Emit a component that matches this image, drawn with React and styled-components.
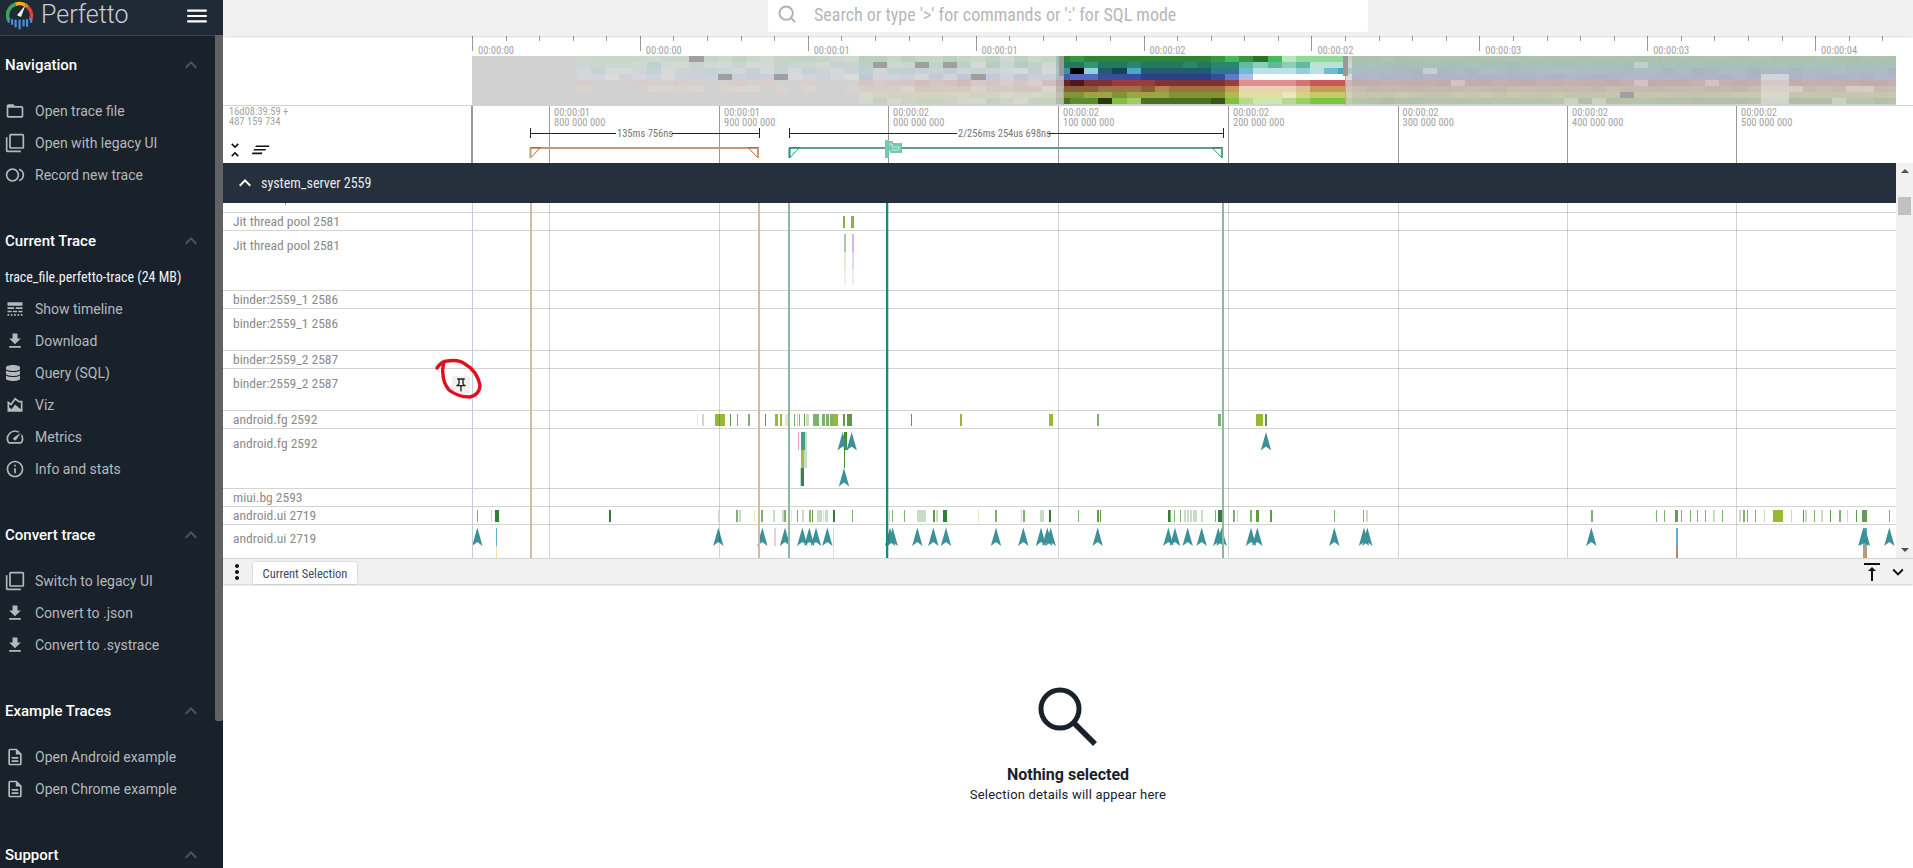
import React from "react";
import styled, { createGlobalStyle } from "styled-components";
import {
  MdFolderOpen, MdFilterNone, MdOutlineFiberSmartRecord, MdLineStyle, MdFileDownload,
  MdOutlineAreaChart, MdSpeed, MdInfoOutline, MdOutlineDescription, MdExpandLess,
  MdMenu, MdUnfoldLess, MdOutlinePushPin, MdVerticalAlignTop, MdKeyboardArrowDown, MdMoreVert,
} from "react-icons/md";
import { FaDatabase } from "react-icons/fa";
import { FiSearch } from "react-icons/fi";

const narrow = `"Roboto Condensed", Roboto, "Liberation Sans", sans-serif`;

const Global = createGlobalStyle`
  html, body { margin: 0; padding: 0; height: 100%; overflow: hidden; background: #fff; }
  body { font-family: Roboto, "Liberation Sans", sans-serif; }
  * { box-sizing: border-box; }
`;

const Page = styled.div`
  display: grid;
  grid-template-columns: 223px 1fr;
  height: 868px;
  width: 1913px;
  overflow: hidden;
`;

/* ---------- sidebar ---------- */
const Sidebar = styled.aside`
  position: relative;
  background: #19212b;
  height: 868px;
  overflow: hidden;
`;
const SideHeader = styled.header`
  height: 36px;
  background: #202a36;
  border-bottom: 1px solid #3a444f;
  display: flex;
  align-items: center;
  padding-left: 6px;
  margin-bottom: 13px;
`;
const LogoMark = styled.svg`
  flex: none;
  margin-top: -5px;
`;
const BrandName = styled.span`
  font-size: 25px;
  font-weight: 300;
  color: #c9ced3;
  margin-left: 7px;
  margin-top: -6px;
  width: 143px;
`;
const MenuIcon = styled.span`
  display: flex;
  color: #fff;
  margin-top: -3px;
`;
const Section = styled.section`
  margin-bottom: 34px;
`;
const SectionHead = styled.div`
  height: 32px;
  display: flex;
  align-items: center;
  justify-content: space-between;
  padding: 0 20px 0 5px;
  margin-bottom: ${(p) => p.$gap}px;
  color: #fff;
  font-size: 15px;
  font-weight: 500;
  svg { color: #4a5560; }
`;
const TraceName = styled.div`
  height: 32px;
  line-height: 32px;
  padding-left: 5px;
  font-family: ${narrow};
  font-stretch: 75%;
  font-size: 14px;
  color: #f2f3f4;
  white-space: nowrap;
`;
const NavItem = styled.div`
  height: 32px;
  display: flex;
  align-items: center;
  padding-left: 5px;
  color: #b5b8bb;
  font-size: 14px;
  svg { flex: none; }
`;
const NavIcon = styled.span`
  width: 30px;
  display: flex;
  align-items: center;
  color: #b5b8bb;
`;
const SideThumb = styled.div`
  position: absolute;
  right: 0;
  top: 35px;
  width: 8px;
  height: 686px;
  background: #5f6368;
  border-radius: 0 0 2px 2px;
`;

/* ---------- main ---------- */
const Main = styled.main`
  display: flex;
  flex-direction: column;
  height: 868px;
  min-width: 0;
`;
const TopBar = styled.div`
  flex: 0 0 36px;
  background: #f1f1f1;
  box-shadow: 0 1px 2px rgba(0, 0, 0, 0.15);
  position: relative;
  display: flex;
  justify-content: center;
`;
const SearchBox = styled.div`
  width: 600px;
  height: 32px;
  background: #fff;
  display: flex;
  align-items: center;
  padding: 0 0 4px 9px;
  border-radius: 0 0 2px 2px;
`;
const SearchText = styled.span`
  margin-left: 17px;
  font-family: ${narrow};
  font-stretch: 75%;
  font-size: 18px;
  color: #b7b7b7;
  white-space: nowrap;
`;
const Overview = styled.div`
  flex: 0 0 70px;
  border-bottom: 1px solid #d2d2d2;
  svg { display: block; }
`;
const TickText = styled.text`
  font-family: ${narrow};
  font-stretch: 75%;
  font-size: 10.5px;
  fill: #a3a3a3;
`;
const ScaleRow = styled.div`
  flex: 0 0 57px;
  display: flex;
  svg { display: block; }
`;
const ScaleLabel = styled.div`
  flex: 0 0 250px;
  border-right: 2px solid #999;
  padding: 1px 0 0 6px;
  font-family: ${narrow};
  font-stretch: 75%;
  font-size: 10.5px;
  line-height: 10px;
  color: #a3a3a3;
  display: flex;
  flex-direction: column;
`;
const ScaleTools = styled.div`
  margin-top: 13px;
  display: flex;
  align-items: center;
  color: #111;
  margin-left: -4px;
  gap: 6px;
`;
const TrackArea = styled.div`
  flex: 0 0 395px;
  min-height: 0;
  display: flex;
`;
const TrackColumn = styled.div`
  flex: 0 0 1673px;
  display: flex;
  flex-direction: column;
`;
const GroupHeader = styled.div`
  flex: 0 0 40px;
  background: #262f3c;
  display: flex;
  align-items: center;
  padding-left: 10px;
  color: #e8eaec;
  font-family: ${narrow};
  font-stretch: 75%;
  font-size: 14px;
  gap: 4px;
  svg { color: #fff; }
`;
const Rows = styled.div`
  position: relative;
  flex: 1 1 auto;
  overflow: hidden;
`;
const Overlay = styled.svg`
  position: absolute;
  inset: 0;
  pointer-events: none;
`;
const TrackRow = styled.div`
  height: ${(p) => p.$h}px;
  display: flex;
  overflow: hidden;
  border-bottom: ${(p) => (p.$last ? "none" : "1px solid #d4d4d4")};
`;
const TrackLabel = styled.div`
  flex: 0 0 249px;
  display: flex;
  justify-content: space-between;
  align-items: flex-start;
  padding: ${(p) => p.$top}px 2px 0 10px;
  font-family: ${narrow};
  font-stretch: 75%;
  font-size: 13.5px;
  line-height: 16px;
  color: #8b8b8b;
  white-space: nowrap;
`;
const PinButton = styled.span`
  width: 18px;
  height: 18px;
  margin-top: 1px;
  background: #f0f0f0;
  border-radius: 2px;
  display: flex;
  align-items: center;
  justify-content: center;
  color: #222;
`;
const TrackCanvas = styled.svg`
  flex: 0 0 1424px;
  display: block;
`;
const ScrollTrack = styled.div`
  flex: 0 0 17px;
  background: #f1f1f1;
  position: relative;
  display: flex;
  flex-direction: column;
  align-items: center;
  justify-content: space-between;
  padding: 6px 0;
`;
const ScrollArrow = styled.span`
  width: 0;
  height: 0;
  border-left: 4px solid transparent;
  border-right: 4px solid transparent;
  ${(p) => (p.$up ? "border-bottom: 4px solid #505050;" : "border-top: 4px solid #505050;")}
`;
const ScrollThumb = styled.div`
  position: absolute;
  top: 34px;
  left: 2px;
  width: 13px;
  height: 18px;
  background: #c1c1c1;
`;
const TabBar = styled.div`
  flex: 0 0 26px;
  background: #f1f1f1;
  border-top: 1px solid #d4d4d4;
  box-shadow: 0 1px 2px rgba(0, 0, 0, 0.2);
  display: flex;
  align-items: flex-end;
  position: relative;
  padding-left: 2px;
`;
const MoreIcon = styled.span`
  display: flex;
  align-self: flex-start;
  margin-top: 1px;
  color: #111;
  width: 28px;
`;
const Tab = styled.div`
  width: 104px;
  height: 22px;
  background: #fff;
  border-radius: 2px 2px 0 0;
  box-shadow: 0 0 2px rgba(0, 0, 0, 0.25);
  font-family: ${narrow};
  font-stretch: 75%;
  font-size: 12.5px;
  line-height: 23px;
  text-align: center;
  color: #3c4b5d;
`;
const TabActions = styled.div`
  margin-left: auto;
  align-self: center;
  display: flex;
  align-items: center;
  color: #111;
  padding-right: 4px;
  gap: 3px;
`;
const Details = styled.div`
  flex: 1 1 auto;
  display: flex;
  flex-direction: column;
  align-items: center;
  padding-top: 103px;
  color: #19212b;
`;
const EmptyTitle = styled.div`
  margin-top: 19px;
  font-size: 16px;
  font-weight: 700;
  line-height: 18px;
`;
const EmptyText = styled.div`
  margin-top: 2px;
  font-size: 13px;
  line-height: 18px;
  letter-spacing: 0.2px;
`;

/* ---------- data ---------- */
const Logo = () => (
  <LogoMark width="28" height="30" viewBox="0 0 28 30">
    <path d="M2.6 20 A11.5 11.5 0 0 1 9.5 4.3" fill="none" stroke="#37a853" strokeWidth="3.6" />
    <path d="M9.5 4.3 A11.5 11.5 0 0 1 19 4.9" fill="none" stroke="#f4b400" strokeWidth="3.6" />
    <path d="M19 4.9 A11.5 11.5 0 0 1 22 7.2" fill="none" stroke="#f07a2a" strokeWidth="3.6" />
    <path d="M22 7.2 A11.5 11.5 0 0 1 24.5 20" fill="none" stroke="#d8453b" strokeWidth="3.6" />
    <path d="M11 15.2 L19.5 5 L15 17 Z" fill="#f4f4f4" />
    {[[1.5, 18, 5], [5, 19, 6], [8.5, 19.5, 8], [12.5, 19.5, 10], [16.5, 19.5, 7], [20, 19, 8], [24, 18, 5]].map(([x, y, h]) => (
      <rect key={x} x={x} y={y} width="2.2" height={h} rx="1.1" fill="#4b8fe0" />
    ))}
  </LogoMark>
);

const nav = [
  {
    title: "Navigation", gap: 14,
    items: [[MdFolderOpen, "Open trace file"], [MdFilterNone, "Open with legacy UI"], [MdOutlineFiberSmartRecord, "Record new trace"]],
  },
  {
    title: "Current Trace", gap: 4, trace: "trace_file.perfetto-trace (24 MB)",
    items: [[MdLineStyle, "Show timeline"], [MdFileDownload, "Download"], [FaDatabase, "Query (SQL)", 16], [MdOutlineAreaChart, "Viz"], [MdSpeed, "Metrics"], [MdInfoOutline, "Info and stats"]],
  },
  {
    title: "Convert trace", gap: 14,
    items: [[MdFilterNone, "Switch to legacy UI"], [MdFileDownload, "Convert to .json"], [MdFileDownload, "Convert to .systrace"]],
  },
  {
    title: "Example Traces", gap: 14,
    items: [[MdOutlineDescription, "Open Android example"], [MdOutlineDescription, "Open Chrome example"]],
  },
  { title: "Support", gap: 14, items: [] },
];

const hash = (i, j) => {
  const v = Math.sin(i * 127.1 + j * 311.7) * 43758.5453;
  return v - Math.floor(v);
};
const hex = (s) => [1, 3, 5].map((k) => parseInt(s.slice(k, k + 2), 16));
const mix = (a, b, t) => a.map((v, k) => Math.round(v + (b[k] - v) * t));
const ramps = [
  ["#1f5f28", "#42bd55", "#dcf5e0"],
  ["#185a48", "#35a582", "#e6f6f0"],
  ["#0a2a36", "#48a8c8", "#dff2f6"],
  ["#20307a", "#6078d0", "#ffffff"],
  ["#501818", "#c85858", "#f0c8c8"],
  ["#5a3a18", "#c89858", "#f4e4d0"],
  ["#5a6818", "#c8cc60", "#f2f2d8"],
  ["#223c10", "#7cc440", "#e6f4d6"],
];
const shade = (r, d) => {
  if (d < 0) return "#000000";
  const [a, b, c] = ramps[r].map(hex);
  const m = d <= 5 ? mix(a, b, d / 5) : mix(b, c, (d - 5) / 4);
  return `rgb(${m.join(",")})`;
};
const selected = [
  [3, 2, 2, 2, 2, 2, 2, 2, 2, 2, 3, 5, 3, 1, 5, 8, 7, 7, 7, 7],
  [2, 4, 2, 2, 3, 2, 2, 2, 3, 2, 3, 3, 6, 7, 6, 7, 6, 8, 8, 8],
  [-1, 7, 2, 1, 5, 2, 2, 2, 2, 2, 3, 3, 6, 8, 8, 8, 7, 8, 6, 5],
  [4, 4, 2, 2, 2, 1, 1, 1, 1, 1, 2, 5, 7, 9, 9, 9, 9, 9, 9, 9],
  [0, 2, 2, 3, 3, 3, 2, 2, 2, 2, 2, 3, 7, 7, 7, 7, 6, 5, 5, 5],
  [2, 2, 3, 3, 3, 2, 4, 3, 3, 3, 3, 5, 8, 8, 8, 8, 7, 5, 5, 5],
  [2, 3, 3, 2, 3, 3, 3, 2, 2, 2, 2, 4, 7, 7, 7, 8, 6, 5, 5, 5],
  [3, 3, 0, 5, 6, 2, 2, 2, 2, 2, 1, 5, 7, 8, 8, 7, 6, 5, 5, 5],
];
const col41 = [2, 2, 4, 3, 1, 2, 2, 2];
const blackCells = { "0:15": 1, "1:28": 1, "1:31": 1, "1:33": 1, "3:17": 1, "3:21": 1, "3:35": 1, "6:81": 1 };
const digitAt = (r, c) => {
  if (blackCells[`${r}:${c}`]) return -1;
  if (c < 7) return null;
  if (c === 41) return col41[r];
  if (c >= 42 && c <= 61) return selected[r][c - 42];
  const h = hash(r + 1, c + 1);
  if (c < 42) {
    if (c < 27 && r >= 6) return null;
    if (c < 27 && r >= 4 && h < 0.6) return null;
    return c < 27 ? 7 + h * 2 : 6 + h * 3;
  }
  if (c >= 91 && c <= 92 && r >= 3) return 8;
  if (h > 0.96) return 7;
  return 2.4 + h * 1.3;
};
const miniCells = [];
for (let c = 0; c <= 101; c += 1) {
  for (let r = 0; r < 8; r += 1) {
    const d = digitAt(r, c);
    if (d !== null) {
      const x = 477.9 + c * 14.1;
      miniCells.push({ key: `${r}-${c}`, x, y: 56 + r * 6, w: Math.min(14.1, 1896 - x), fill: shade(r, d) });
    }
  }
}
const overviewTicks = [472, 639.8, 807.7, 975.6, 1143.5, 1311.4, 1479.3, 1647.2, 1815.1];
const overviewText = ["00:00:00", "00:00:00", "00:00:01", "00:00:01", "00:00:02", "00:00:02", "00:00:03", "00:00:03", "00:00:04"];
const scale = [
  [549, "00:00:01", "800 000 000"], [719, "00:00:01", "900 000 000"], [888, "00:00:02", "000 000 000"],
  [1058, "00:00:02", "100 000 000"], [1228, "00:00:02", "200 000 000"], [1397.5, "00:00:02", "300 000 000"],
  [1567, "00:00:02", "400 000 000"], [1736, "00:00:02", "500 000 000"],
];

const tones = { l: "#98b838", d: "#2f8035", m: "#7fb26e", p: "#c9dcc4", y: "#e6ecb8", n: "#5f9a45" };
const slice = (o, list) => list.map(([z, w, c]) => ({ x: o + z / 3, w: Math.max(w / 3, 1), c: tones[c] || c }));
const fgSlices = [
  ...slice(470, [[682, 3, "y"], [697, 5, "p"], [736, 29, "l"], [780, 3, "n"], [801, 3, "m"], [835, 5, "m"], [885, 4, "n"], [914, 10, "l"], [930, 6, "l"], [945, 15, "y"], [972, 4, "m"], [980, 3, "p"], [988, 3, "m"], [1001, 4, "n"], [1008, 8, "p"], [1028, 12, "m"], [1042, 6, "m"], [1055, 10, "m"], [1068, 8, "m"], [1080, 14, "m"], [1090, 14, "l"], [1118, 8, "n"], [1130, 16, "n"], [1323, 3, "n"], [1472, 4, "m"]]),
  ...slice(960, [[0, 6, "l"], [268, 10, "l"], [412, 6, "m"], [775, 8, "m"], [888, 22, "l"], [915, 6, "n"]]),
];
const uiSlices = [
  ...slice(470, [[22, 3, "m"], [62, 5, "p"], [75, 12, "d"], [418, 6, "d"], [743, 5, "p"], [797, 6, "m"], [808, 4, "p"], [851, 3, "y"], [873, 6, "m"], [910, 4, "p"], [935, 6, "p"], [943, 4, "m"], [964, 3, "y"], [981, 3, "m"], [997, 6, "p"], [1018, 4, "m"], [1027, 3, "n"], [1040, 16, "p"], [1058, 4, "y"], [1064, 10, "p"], [1088, 7, "d"], [1147, 3, "m"], [1258, 3, "p"], [1266, 3, "m"], [1303, 3, "m"], [1342, 25, "p"], [1388, 8, "n"], [1397, 6, "p"], [1420, 10, "d"]]),
  ...slice(960, [[55, 3, "y"], [106, 5, "m"], [184, 3, "p"], [190, 5, "m"], [241, 12, "p"], [267, 6, "d"], [354, 4, "m"], [411, 7, "n"], [420, 4, "n"], [624, 5, "d"], [631, 2, "m"], [642, 3, "m"], [660, 3, "m"], [672, 5, "p"], [682, 5, "p"], [690, 5, "p"], [698, 12, "p"], [723, 6, "p"], [765, 4, "m"], [774, 12, "d"], [820, 4, "m"], [830, 4, "p"], [870, 5, "m"], [888, 8, "n"], [930, 7, "n"], [1122, 3, "m"], [1209, 4, "m"], [1217, 6, "p"]]),
  ...slice(1450, [[422, 6, "m"], [618, 3, "m"], [641, 3, "m"], [675, 10, "#659c5c"], [693, 3, "m"], [719, 3, "m"], [741, 3, "m"], [766, 3, "m"], [790, 5, "p"], [816, 3, "m"], [867, 6, "p"], [880, 6, "m"], [891, 3, "m"], [915, 3, "m"], [941, 4, "p"], [969, 30, "l"], [1022, 3, "p"], [1060, 3, "n"], [1066, 5, "p"], [1092, 3, "m"], [1114, 6, "p"], [1140, 3, "n"], [1167, 5, "m"], [1191, 3, "p"], [1218, 3, "n"], [1236, 14, "#659c5c"], [1317, 3, "m"]]),
];
const uiArrows = [
  ...[22, 745, 877, 945, 997, 1018, 1038, 1072, 1260, 1268, 1342, 1390, 1428].map((z) => 470 + z / 3),
  ...[108, 190, 243, 262, 272, 413, 625, 645, 683, 725, 775, 785, 873, 892, 1123, 1212, 1222].map((z) => 960 + z / 3),
  ...[424, 1240, 1245, 1318].map((z) => 1450 + z / 3),
];
const Arrow = ({ x, y }) => <path d={`M${x} ${y} L${x + 5.2} ${y + 18.5} L${x} ${y + 14.5} L${x - 5.2} ${y + 18.5} Z`} fill="#3c9197" />;

const Bars = ({ items, y, h }) =>
  items.map((s, i) => <rect key={i} x={s.x} y={y} width={s.w} height={h} fill={s.c} shapeRendering="crispEdges" />);

const rows = [
  { h: 10 },
  { h: 18, label: "Jit thread pool 2581", draw: <Bars items={[{ x: 843, w: 2, c: "#8cb04a" }, { x: 851, w: 2.5, c: "#8cb04a" }]} y={3} h={12} /> },
  {
    h: 60, label: "Jit thread pool 2581", top: 6,
    draw: (
      <>
        <rect x="844" y="3" width="2" height="18" fill="#a8cc9c" />
        <rect x="852" y="3" width="2" height="18" fill="#d8b8e0" />
        <rect x="844" y="21" width="2" height="18" fill="#e4ecd0" />
        <rect x="852" y="21" width="2" height="18" fill="#e8d8ee" />
        <rect x="844" y="39" width="2" height="15" fill="#eef0f2" />
        <rect x="852" y="39" width="2" height="15" fill="#f0e8f2" />
      </>
    ),
  },
  { h: 18, label: "binder:2559_1 2586" },
  { h: 42, label: "binder:2559_1 2586", top: 6 },
  { h: 18, label: "binder:2559_2 2587" },
  { h: 42, label: "binder:2559_2 2587", top: 6, pin: true },
  { h: 18, label: "android.fg 2592", draw: <Bars items={fgSlices} y={3} h={12} /> },
  {
    h: 60, label: "android.fg 2592", top: 6,
    draw: (
      <>
        <Bars items={slice(470, [[984, 3, "#ec9cc8"], [993, 13, "#42a088"], [1005, 6, "p"], [1122, 10, "#4a8a2a"]])} y={3} h={18} />
        <Bars items={slice(470, [[993, 10, "#a2bc50"], [1003, 8, "p"], [1122, 3, "#4a8a2a"]])} y={21} h={18} />
        <Bars items={slice(470, [[990, 3, "p"], [993, 9, "#348060"]])} y={39} h={18} />
        <Arrow x={470 + 1118 / 3} y={3} />
        <Arrow x={470 + 1145 / 3} y={3} />
        <Arrow x={470 + 1122 / 3} y={39} />
        <Arrow x={960 + 918 / 3} y={3} />
      </>
    ),
  },
  { h: 18, label: "miui.bg 2593" },
  { h: 18, label: "android.ui 2719", draw: <Bars items={uiSlices} y={3} h={12} /> },
  {
    h: 33, label: "android.ui 2719", top: 5, last: true,
    draw: (
      <>
        <Bars items={slice(470, [[77, 4, "#62b0d8"], [912, 5, "#e2caf2"], [1089, 2, "#c8dcec"]])} y={3} h={18} />
        <Bars items={slice(470, [[77, 3, "#f0e2a4"], [1089, 2, "#f0e2a4"]])} y={21} h={12} />
        <Bars items={slice(1450, [[678, 7, "#62acd8"], [1240, 12, "#62acd8"]])} y={3} h={18} />
        <Bars items={slice(1450, [[678, 7, "#b88860"], [1240, 12, "#c09878"]])} y={21} h={12} />
        {uiArrows.map((x) => <Arrow key={x} x={x} y={2.5} />)}
      </>
    ),
  },
];

const Corner = ({ x, dir, color, line }) => {
  const tip = dir > 0 ? x + 10 : x - 10;
  return (
    <g fill="none">
      <path d={`M${x} 147.5 L${tip} 147.5 L${x} 158 Z`} stroke={color} strokeWidth="1" />
      <path d={`M${x} 148 L${x} 158`} stroke={line} strokeWidth="2" />
    </g>
  );
};

export default function App() {
  return (
    <Page>
      <Global />
      <Sidebar>
        <SideHeader>
          <Logo />
          <BrandName>Perfetto</BrandName>
          <MenuIcon><MdMenu size={26} /></MenuIcon>
        </SideHeader>
        {nav.map((sec) => (
          <Section key={sec.title}>
            <SectionHead $gap={sec.gap}>
              {sec.title}
              <MdExpandLess size={24} />
            </SectionHead>
            {sec.trace && <TraceName>{sec.trace}</TraceName>}
            {sec.items.map(([Icon, label, size]) => (
              <NavItem key={label}>
                <NavIcon><Icon size={size || 20} /></NavIcon>
                {label}
              </NavItem>
            ))}
          </Section>
        ))}
        <SideThumb />
      </Sidebar>

      <Main>
        <TopBar>
          <SearchBox>
            <FiSearch size={20} color="#b2b2b2" strokeWidth={2.4} />
            <SearchText>Search or type '&gt;' for commands or ':' for SQL mode</SearchText>
          </SearchBox>
        </TopBar>

        <Overview>
          <svg width="1690" height="69" viewBox="223 36 1690 69">
            <rect x="472" y="56" width="1424" height="49" fill="#d2d2d2" />
            <g shapeRendering="crispEdges">
              {miniCells.map((c) => <rect key={c.key} x={c.x} y={c.y} width={c.w} height="6.2" fill={c.fill} />)}
              <rect x="472" y="56" width="591" height="49" fill="#d1d1d1" fillOpacity="0.76" />
              <rect x="1345" y="56" width="551" height="49" fill="#d1d1d1" fillOpacity="0.76" />
              <rect x="1063" y="56" width="1" height="49" fill="#aaa" />
              <rect x="1345" y="56" width="1" height="49" fill="#aaa" />
              <rect x="1059" y="56" width="5" height="20" fill="#999" />
              <rect x="1343" y="56" width="5" height="20" fill="#999" />
            </g>
            {overviewTicks.map((x, i) => (
              <g key={x}>
                <rect x={x} y="36" width="1" height="15" fill="#999" shapeRendering="crispEdges" />
                {[1, 2, 3, 4].map((k) => (
                  <rect key={k} x={x + k * 33.6} y="36" width="1" height="5" fill="#999" shapeRendering="crispEdges" />
                ))}
                <TickText x={x + 6} y="54">{overviewText[i]}</TickText>
              </g>
            ))}
          </svg>
        </Overview>

        <ScaleRow>
          <ScaleLabel>
            <span>16d08:39:59 +</span>
            <span>487 159 734</span>
            <ScaleTools>
              <MdUnfoldLess size={20} />
              <svg width="20" height="14" viewBox="0 0 20 14">
                <path d="M5 2.5 H18.5 L17.8 4 H4.3 Z M3.2 6 H15 L14.3 7.6 H2.5 Z M1.5 9.6 H11.5 L10.8 11.2 H.8 Z" fill="#111" />
              </svg>
            </ScaleTools>
          </ScaleLabel>
          <svg width="1440" height="57" viewBox="473 106 1440 57">
            {scale.map(([x, a, b]) => (
              <g key={x}>
                <rect x={x} y="106" width="1" height="57" fill="#999" shapeRendering="crispEdges" />
                <TickText x={x + 5} y="116">{a}</TickText>
                <TickText x={x + 5} y="126">{b}</TickText>
              </g>
            ))}
            <path d="M530.5 133 H616 M672 133 H759 M530.5 128 V138 M759 128 V138" stroke="#222" fill="none" shapeRendering="crispEdges" />
            <TickText x="617" y="137" style={{ fill: "#777" }}>135ms 756ns</TickText>
            <path d="M789.5 133 H957 M1047 133 H1223 M789.5 128 V138 M1223 128 V138" stroke="#222" fill="none" shapeRendering="crispEdges" />
            <TickText x="958" y="137" style={{ fill: "#777" }}>2/256ms 254us 698ns</TickText>

            <rect x="530" y="147" width="229" height="2" fill="#c69a75" />
            <Corner x={530.5} dir={1} color="#b4692e" line="#c69a75" />
            <Corner x={758} dir={-1} color="#b4692e" line="#c69a75" />
            <rect x="789" y="147" width="434" height="2" fill="#5f9f88" />
            <Corner x={789.5} dir={1} color="#1b8f8f" line="#1b8f8f" />
            <Corner x={1222} dir={-1} color="#1b8f8f" line="#5f9f88" />
            <path d="M885 140 H888.5 V141 H893 V143 H902 V153 H890 V151 H888.5 V158 H885 Z" fill="#72c8b0" />
            <path d="M889 144 H892 V147 H899 V150 H891" fill="none" stroke="#ffffff" strokeOpacity="0.6" />
          </svg>
        </ScaleRow>

        <TrackArea>
          <TrackColumn>
            <GroupHeader>
              <MdExpandLess size={24} />
              system_server 2559
            </GroupHeader>
            <Rows>
              {rows.map((r, i) => (
                <TrackRow key={i} $h={r.h} $last={r.last}>
                  <TrackLabel $top={r.top || 0}>
                    {r.label}
                    {r.pin && <PinButton><MdOutlinePushPin size={16} /></PinButton>}
                  </TrackLabel>
                  <TrackCanvas width="1424" height={r.last ? r.h : r.h - 1} viewBox={`472 0 1424 ${r.last ? r.h : r.h - 1}`}>
                    {r.draw}
                  </TrackCanvas>
                </TrackRow>
              ))}
              <Overlay width="1673" height="355" viewBox="223 203 1673 355">
                <g shapeRendering="crispEdges">
                  <rect x="285" y="203" width="1" height="2" fill="#999" />
                  <rect x="472" y="203" width="1" height="355" fill="#c4cbdb" />
                  {scale.map(([x]) => <rect key={x} x={x} y="203" width="1" height="355" fill="#000" fillOpacity="0.17" />)}
                  <rect x="530" y="203" width="2" height="355" fill="#d8b8a0" />
                  <rect x="758" y="203" width="2" height="355" fill="#d8b8a0" />
                  <rect x="788" y="203" width="2" height="355" fill="#8fb8a0" />
                  <rect x="1222" y="203" width="2" height="355" fill="#8fb8a0" />
                  <rect x="886" y="203" width="2" height="355" fill="#109078" />
                </g>
                <path
                  d="M437 368 C441 362 444 361 447 361 C453 360 460 360 465 364 C472 368 478 376 480 385 C480 391 476 396 470 397 C462 397 454 394 449 390 C445 385 443 380 443 374 C442 370 443 366 444 362"
                  fill="none" stroke="#e0101e" strokeWidth="3.4" strokeLinecap="round"
                />
              </Overlay>
            </Rows>
          </TrackColumn>
          <ScrollTrack>
            <ScrollArrow $up />
            <ScrollThumb />
            <ScrollArrow />
          </ScrollTrack>
        </TrackArea>

        <TabBar>
          <MoreIcon><MdMoreVert size={24} /></MoreIcon>
          <Tab>Current Selection</Tab>
          <TabActions>
            <MdVerticalAlignTop size={24} />
            <MdKeyboardArrowDown size={22} />
          </TabActions>
        </TabBar>

        <Details>
          <svg width="60" height="60" viewBox="0 0 60 60">
            <circle cx="22" cy="22" r="19" fill="none" stroke="#19212b" strokeWidth="5" />
            <path d="M36 36 L57 57" stroke="#19212b" strokeWidth="5.5" />
          </svg>
          <EmptyTitle>Nothing selected</EmptyTitle>
          <EmptyText>Selection details will appear here</EmptyText>
        </Details>
      </Main>
    </Page>
  );
}
